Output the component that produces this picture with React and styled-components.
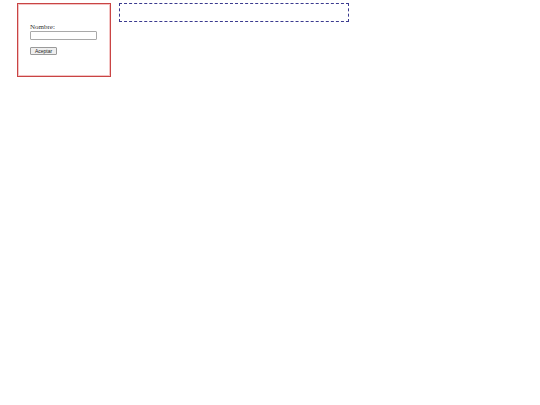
import React, { useState } from 'react';
import styled, { createGlobalStyle } from 'styled-components';

const GlobalStyle = createGlobalStyle`
  html, body {
    margin: 0;
    padding: 0;
    background: #fff;
  }
`;

const Page = styled.div`
  display: flex;
  align-items: flex-start;
  gap: 8px;
  padding: 3px 0 0 17px;
`;

const Panel = styled.div`
  width: 94px;
  height: 74px;
  box-sizing: border-box;
  border: 1px solid #c94444;
  box-shadow: inset 0 0 0 1px #f3c4c4;
  padding: 19px 12px 0 12px;
`;

const Form = styled.form`
  display: flex;
  flex-direction: column;
  align-items: flex-start;
`;

const Label = styled.label`
  font-family: "Liberation Serif", serif;
  font-size: 7px;
  line-height: 8px;
  color: #333;
`;

const Input = styled.input`
  width: 65px;
  height: 7px;
  box-sizing: content-box;
  margin: 0;
  padding: 0;
  border: 1px solid #a9a9a9;
  border-radius: 1px;
  background: #fff;
  font-size: 5px;
`;

const Button = styled.button`
  margin-top: 7px;
  width: 27px;
  height: 8px;
  box-sizing: border-box;
  padding: 0;
  font-family: "Liberation Sans", Arial, sans-serif;
  font-size: 5px;
  line-height: 6px;
  color: #222;
  background: #efefef;
  border: 1px solid #9a9a9a;
  border-radius: 1px;
  cursor: pointer;
`;

const Output = styled.div`
  width: 230px;
  height: 19px;
  box-sizing: border-box;
  border: 1px dashed #3b3b8f;
`;

const App = () => {
  const [nombre, setNombre] = useState('');
  const [saludo, setSaludo] = useState('');

  const handleSubmit = (e) => {
    e.preventDefault();
    setSaludo(nombre);
  };

  return (
    <>
      <GlobalStyle />
      <Page>
        <Panel>
          <Form onSubmit={handleSubmit}>
            <Label htmlFor="nombre">Nombre:</Label>
            <Input
              id="nombre"
              type="text"
              value={nombre}
              onChange={(e) => setNombre(e.target.value)}
            />
            <Button type="submit">Aceptar</Button>
          </Form>
        </Panel>
        <Output>{saludo}</Output>
      </Page>
    </>
  );
};

export default App;
